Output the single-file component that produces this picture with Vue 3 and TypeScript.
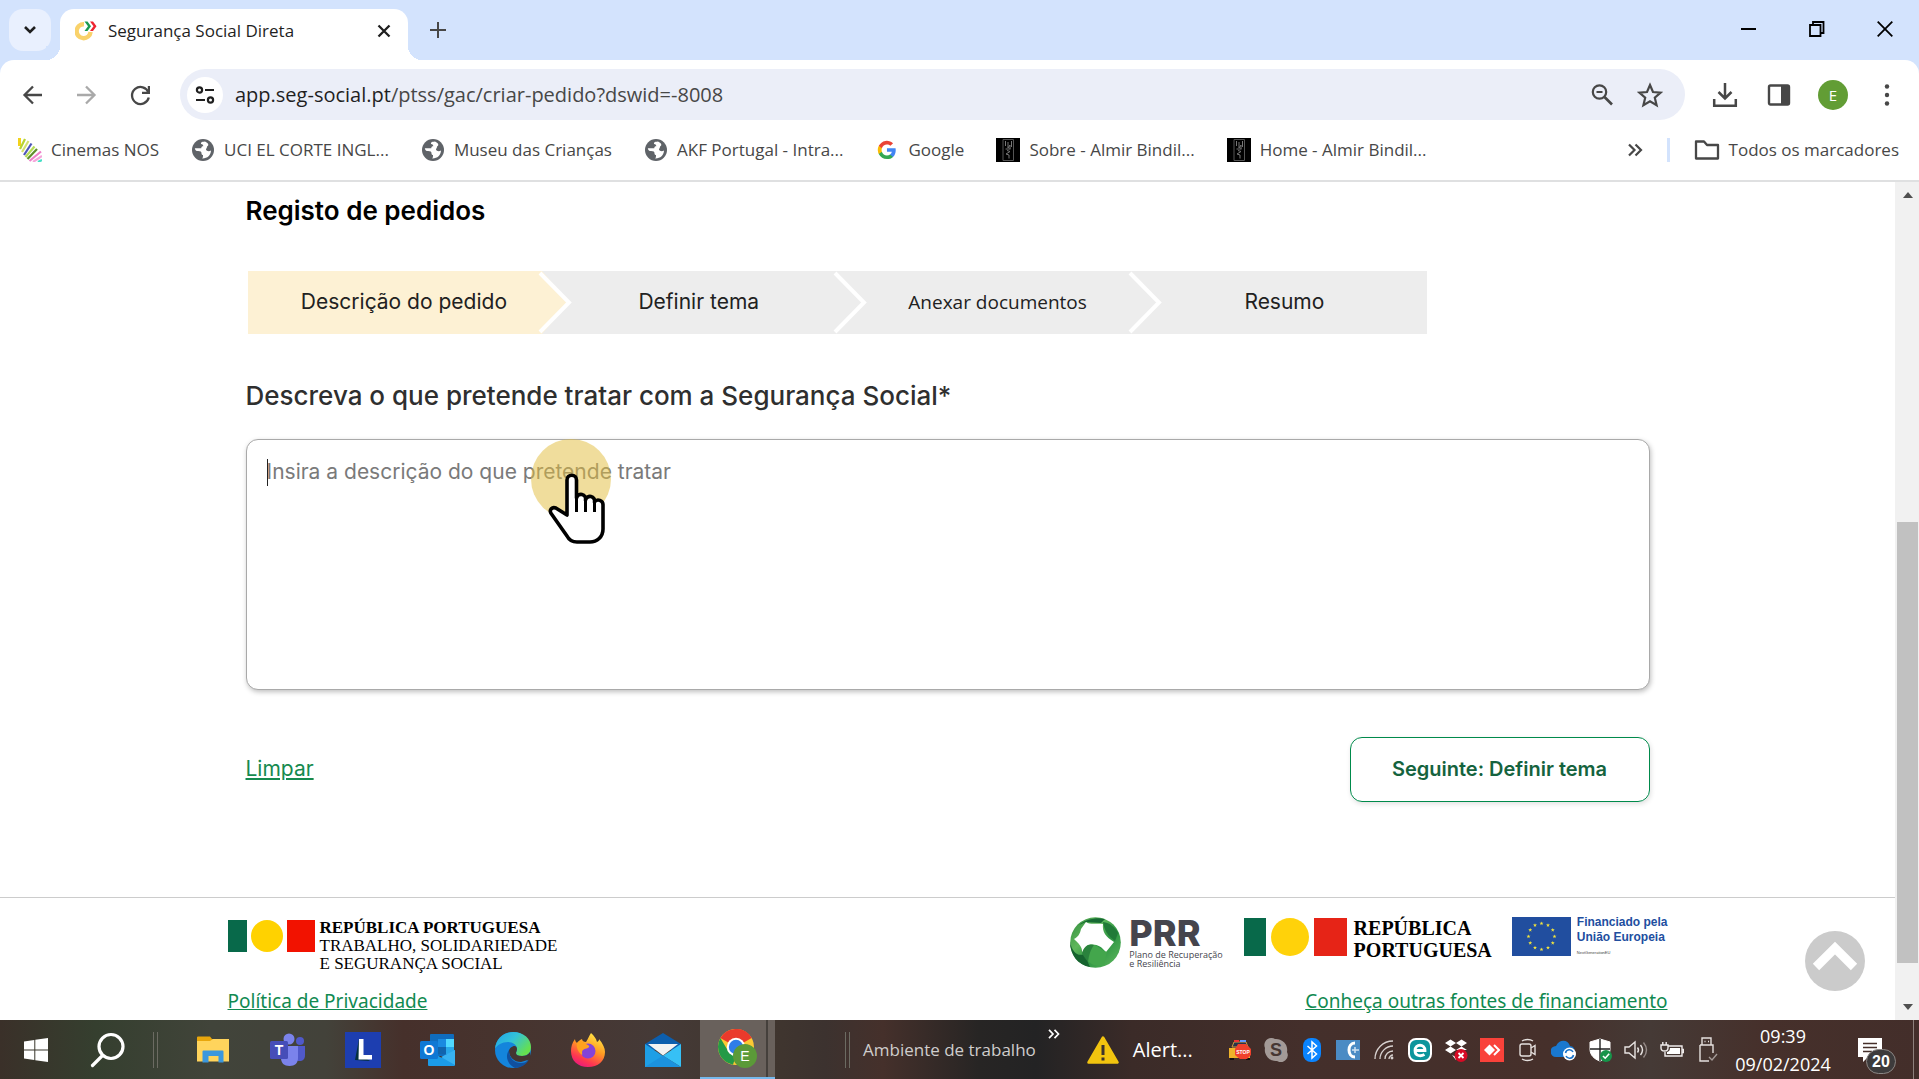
<script setup lang="ts">
import { ref } from 'vue'

interface Bookmark {
  icon: 'nos' | 'globe' | 'google' | 'dark'
  label: string
}

const bookmarks: Bookmark[] = [
  { icon: 'nos', label: 'Cinemas NOS' },
  { icon: 'globe', label: 'UCI EL CORTE INGL...' },
  { icon: 'globe', label: 'Museu das Crianças' },
  { icon: 'globe', label: 'AKF Portugal - Intra...' },
  { icon: 'google', label: 'Google' },
  { icon: 'dark', label: 'Sobre - Almir Bindil...' },
  { icon: 'dark', label: 'Home - Almir Bindil...' },
]

const steps: string[] = ['Descrição do pedido', 'Definir tema', 'Anexar documentos', 'Resumo']
const current = ref(0)
const description = ref('')

/* five-pointed star centred on (cx, cy) */
function star(cx: number, cy: number, r: number): string {
  const points: string[] = []
  for (let i = 0; i < 10; i++) {
    const a = (Math.PI / 5) * i - Math.PI / 2
    const d = i % 2 ? r * 0.4 : r
    points.push(`${(cx + d * Math.cos(a)).toFixed(2)},${(cy + d * Math.sin(a)).toFixed(2)}`)
  }
  return points.join(' ')
}
const euStars: string[] = Array.from({ length: 12 }, (_, i) => {
  const a = (Math.PI / 6) * i
  return star(29.5 + 13 * Math.sin(a), 19.5 - 13 * Math.cos(a), 2.1)
})
</script>

<template>
  <div class="screen">
    <header class="browser">
      <div class="tabstrip">
        <button class="tab-search" aria-label="Pesquisar separadores">
          <svg width="14" height="10" viewBox="0 0 14 10"><path d="M2 2l5 5 5-5" fill="none" stroke="#1f1f1f" stroke-width="2.6" /></svg>
        </button>
        <div class="tab">
          <svg class="favicon" width="22" height="22" viewBox="0 0 22 22">
            <path d="M9 4.2A7 7 0 1 0 15.6 12" fill="none" stroke="#f9d26b" stroke-width="4.4" />
            <path d="M9.5 1.5h3l3.5 4.7-3.5 4.8h-3L13 6.200z" fill="#1b9a50" />
            <path d="M15 1.500h3l3.500 4.700-3.500 4.800h-3l3.500-4.800z" fill="#ee2430" />
          </svg>
          <span class="tab-title">Segurança Social Direta</span>
          <button class="tab-close" aria-label="Fechar separador">
            <svg width="14" height="14" viewBox="0 0 14 14"><path d="M1.500 1.500l11 11M12.500 1.500l-11 11" stroke="#1f1f1f" stroke-width="2.300" /></svg>
          </button>
        </div>
        <button class="new-tab" aria-label="Novo separador">
          <svg width="16" height="16" viewBox="0 0 16 16"><path d="M8 0v16M0 8h16" stroke="#474747" stroke-width="2" /></svg>
        </button>
        <div class="window-buttons">
          <button aria-label="Minimizar"><svg width="16" height="16" viewBox="0 0 16 16"><path d="M0 8h15" stroke="#000" stroke-width="2" /></svg></button>
          <button aria-label="Restaurar"><svg width="16" height="16" viewBox="0 0 16 16"><path d="M1 4h10.500v11H1zM4 4V1h10.500v11h-3" fill="none" stroke="#000" stroke-width="1.800" /></svg></button>
          <button aria-label="Fechar"><svg width="16" height="16" viewBox="0 0 16 16"><path d="M.7.7l14.600 14.600M15.300.7L.7 15.300" stroke="#000" stroke-width="1.800" /></svg></button>
        </div>
      </div>

      <div class="toolbar">
        <button class="tool" aria-label="Anterior">
          <svg width="24" height="24" viewBox="0 0 24 24"><path d="M22 12H5.500M13 3.500L4.500 12l8.500 8.500" fill="none" stroke="#474747" stroke-width="2.300" /></svg>
        </button>
        <button class="tool" aria-label="Seguinte">
          <svg width="24" height="24" viewBox="0 0 24 24"><path d="M3 12h16.500M12 3.500l8.500 8.500-8.500 8.500" fill="none" stroke="#a9a9a9" stroke-width="2.300" /></svg>
        </button>
        <button class="tool" aria-label="Atualizar">
          <svg width="24" height="24" viewBox="0 0 24 24"><path d="M20.500 9.500A8.500 8.500 0 1 0 20.800 14.500" fill="none" stroke="#474747" stroke-width="2.300" /><path d="M22 3v8h-8V8.800h5.800V3z" fill="#474747" /></svg>
        </button>
        <div class="omnibox">
          <button class="site-info" aria-label="Informações do site">
            <svg width="20" height="18" viewBox="0 0 20 18" fill="none" stroke="#1f1f1f" stroke-width="2.200"><circle cx="4.500" cy="4" r="2.600" /><path d="M10 4h9M1 14h9" /><circle cx="15.500" cy="14" r="2.600" /></svg>
          </button>
          <span class="url"><b>app.seg-social.pt</b>/ptss/gac/criar-pedido?dswid=-8008</span>
          <button class="tool" aria-label="Zoom">
            <svg width="24" height="24" viewBox="0 0 24 24" fill="none" stroke="#474747"><circle cx="9.500" cy="9" r="6.700" stroke-width="2.200" /><path d="M14.500 14l7.500 7.500" stroke-width="2.600" /><path d="M6.500 9h6" stroke-width="2" /></svg>
          </button>
          <button class="tool" aria-label="Adicionar aos marcadores">
            <svg width="26" height="26" viewBox="0 0 26 26"><path d="M13 3l3 7 7.600.7-5.800 5 1.800 7.500L13 19.200l-6.600 4 1.800-7.500-5.800-5L10 10z" fill="none" stroke="#474747" stroke-width="2.200" /></svg>
          </button>
        </div>
        <button class="tool" aria-label="Transferências">
          <svg width="26" height="26" viewBox="0 0 26 26" fill="none" stroke="#474747" stroke-width="2.500"><path d="M13 1v15M6.500 10l6.500 6.500 6.500-6.500M2.200 17v6.800h21.600V17" /></svg>
        </button>
        <button class="tool" aria-label="Painel lateral">
          <svg width="24" height="24" viewBox="0 0 24 24"><rect x="2" y="2.500" width="20" height="19" rx="1.500" fill="none" stroke="#474747" stroke-width="2.400" /><path d="M14 2h8v20h-8z" fill="#474747" /></svg>
        </button>
        <button class="tool avatar" aria-label="Perfil">E</button>
        <button class="tool" aria-label="Menu">
          <svg width="6" height="24" viewBox="0 0 6 24" fill="#474747"><circle cx="3" cy="3.500" r="2.200" /><circle cx="3" cy="12" r="2.200" /><circle cx="3" cy="20.500" r="2.200" /></svg>
        </button>
      </div>

      <nav class="bookmarks">
        <a v-for="b in bookmarks" :key="b.label" class="bookmark" href="#">
          <svg v-if="b.icon === 'nos'" width="24" height="24" viewBox="0 0 24 24" fill="none" stroke-width="2.200">
            <path d="M1.500 0v8" stroke="#f2d21c" stroke-width="3" /><path d="M7 1L2 11" stroke="#b7d433" /><path d="M10.500 3L4 14" stroke="#d3e070" /><path d="M13.500 5.500L6 17" stroke="#4d55b8" /><path d="M16.500 8.500L7.500 19" stroke="#b5dc55" /><path d="M19 11L9.500 21" stroke="#5f8f2a" /><path d="M23 13.500L11.500 23" stroke="#ee7fc8" /><path d="M24 18l-9 6" stroke="#f5a5da" /><path d="M24 22l-4 2" stroke="#45dfc6" />
          </svg>
          <svg v-else-if="b.icon === 'globe'" width="24" height="24" viewBox="0 0 24 24">
            <circle cx="12" cy="12" r="11" fill="#5f6368" />
            <path d="M14 3.500c-4 .3-4 1.200-4 2.500 1.700.2 2.300 1 2.300 2.300-1.400 0-2 .6-2 2h-6.500c.6 2.500 1.300 2.700 3.200 2.700 2.600 0 3.500.7 3.500 2.500 0 1.500 1 1.500 1.500 1.500 0 1.500 0 2.500-.8 3.500 5 .2 8.800-3.500 8.800-8-1.700 1.200-4.500.8-5-1-.3-1 1-1.200.9-2.300-.1-1 1.600-1.200 1.400-2.400 0-1.300-1.500-2.600-3.300-3.300z" fill="#fff" />
          </svg>
          <svg v-else-if="b.icon === 'google'" width="24" height="24" viewBox="0 0 24 24">
            <g transform="translate(1 2) scale(.83)"><path fill="#4285F4" d="M22.560 12.250c0-.78-.07-1.530-.2-2.250H12v4.260h5.920a5.060 5.060 0 0 1-2.210 3.310v2.770h3.570c2.080-1.920 3.280-4.740 3.280-8.090z" /><path fill="#34A853" d="M12 23c2.970 0 5.460-.98 7.280-2.660l-3.570-2.770c-.98.660-2.230 1.060-3.710 1.060-2.860 0-5.290-1.930-6.160-4.530H2.180v2.840A11 11 0 0 0 12 23z" /><path fill="#FBBC05" d="M5.840 14.090a6.600 6.600 0 0 1 0-4.180V7.070H2.180a11 11 0 0 0 0 9.860z" /><path fill="#EA4335" d="M12 5.380c1.620 0 3.060.56 4.210 1.640l3.150-3.150A11 11 0 0 0 2.180 7.070l3.660 2.840C6.710 7.310 9.140 5.380 12 5.380z" /></g>
          </svg>
          <svg v-else width="24" height="24" viewBox="0 0 24 24">
            <path d="M0 0h24v24H0z" fill="#000" /><path d="M7 1.500h10.500v21H7z" fill="none" stroke="#555" /><path d="M9.500 3v5M12 4v6l2-3v4M15.500 3v6M9.500 11h5M11 12.500l3 1-4 2.500 3 1v3.500" fill="none" stroke="#777" />
          </svg>
          <span>{{ b.label }}</span>
        </a>
        <button class="more" aria-label="Mais marcadores">
          <svg width="16" height="14" viewBox="0 0 16 14"><path d="M2 1.500L7.500 7 2 12.500M8.500 1.500L14 7l-5.500 5.500" fill="none" stroke="#474747" stroke-width="2.200" /></svg>
        </button>
        <span class="divider"></span>
        <a class="bookmark" href="#">
          <svg width="26" height="24" viewBox="0 0 26 24"><path d="M2 3.500h8l3 3.500h11v13.500H2z" fill="none" stroke="#474747" stroke-width="2.300" stroke-linejoin="round" /></svg>
          <span>Todos os marcadores</span>
        </a>
      </nav>
    </header>

    <div class="viewport">
      <div class="page">
        <main class="content">
          <h1>Registo de pedidos</h1>
          <ol class="steps">
            <li v-for="(s, i) in steps" :key="s" :class="{ active: i === current, plain: i === 2 }">
              {{ s }}
              <svg v-if="i < steps.length - 1" class="chevron" width="34" height="63" viewBox="0 0 34 63">
                <path d="M0 0h4l27 31.500L4 63H0z" :fill="i === current ? '#fdf1d4' : '#ededed'" />
                <path d="M2 2l29 29.500L2 61" fill="none" stroke="#fff" stroke-width="4" />
              </svg>
            </li>
          </ol>
          <label class="question" for="descricao">Descreva o que pretende tratar com a Segurança Social*</label>
          <div class="field">
            <textarea id="descricao" v-model="description" placeholder="Insira a descrição do que pretende tratar"></textarea>
            <span class="caret"></span>
            <span class="halo"></span>
            <svg class="hand" width="58" height="72" viewBox="0 0 58 72">
              <path d="M19 42V7a4.700 4.700 0 0 1 9.500 0V25a4.500 4.500 0 0 1 9 2 4.500 4.500 0 0 1 9 2 4.700 4.700 0 0 1 8.500 3V56c0 8-6 13-13 13H29c-5 0-8-2-10-6L2.800 40c-1.500-3 1.200-6.500 5-5z" fill="#fff" stroke="#000" stroke-width="3.600" stroke-linejoin="round" />
              <path d="M28.500 24v15M37.500 27v12M46.500 30v9" stroke="#000" stroke-width="3" />
            </svg>
          </div>
          <div class="actions">
            <a class="clear" href="#">Limpar</a>
            <button class="next">Seguinte: Definir tema</button>
          </div>
        </main>

        <footer class="footer">
          <div class="footer-inner">
            <div class="logos">
              <div class="gov">
                <svg width="88" height="32" viewBox="0 0 88 32"><path d="M0 0h19v32H0z" fill="#08694a" /><circle cx="39" cy="16" r="16" fill="#ffd200" /><path d="M59 0h28v32H59z" fill="#f21200" /></svg>
                <p><b>REPÚBLICA PORTUGUESA</b><br />TRABALHO, SOLIDARIEDADE<br />E SEGURANÇA SOCIAL</p>
              </div>
              <div class="prr">
                <svg width="51" height="51" viewBox="0 0 51 51">
                  <defs><linearGradient id="leaf" x1="0" y1="0" x2="1" y2="1"><stop offset="0" stop-color="#2f8a3c" /><stop offset=".35" stop-color="#5fb75b" /><stop offset=".6" stop-color="#2c9442" /><stop offset="1" stop-color="#63bb60" /></linearGradient></defs>
                  <circle cx="25.500" cy="25.500" r="25.300" fill="url(#leaf)" />
                  <path d="M0 25C2 35 8 40 14 37l6 13C8 48 0 38 0 25z" fill="#16632f" />
                  <path d="M9 8C15 3 26 0 35 2L31 6 16 5z" fill="#176a33" />
                  <path d="M33 5c1 8 5 14 12 19l3-8C45 10 40 6 33 5z" fill="#217a38" />
                  <path d="M11 12L16 5c4 3 11 1 17 2-1 8 3 13 11 18l-8 10c-5-6-10-9-18-7L12 36C13 30 8 26 4 22c4-2 6-5 7-10z" fill="#fff" />
                  <path d="M12 36c2-7 7-10 12-8 5 1 8 6 13 7l-3 13c-8 2-16 0-22-12z" fill="#43a64c" />
                  <path d="M12 36c2-7 7-10 12-8-3 4-5 9-6 17-3-2-5-5-6-9z" fill="#1a6b33" opacity=".6" />
                </svg>
                <div class="prr-name"><b>PRR</b><span>Plano de Recuperação<br />e Resiliência</span></div>
              </div>
              <div class="gov large">
                <svg width="104" height="38" viewBox="0 0 104 38"><path d="M0 0h22v38H0z" fill="#08694a" /><circle cx="46" cy="19" r="19" fill="#ffd20a" /><path d="M70 0h33v38H70z" fill="#e62417" /></svg>
                <p><b>REPÚBLICA<br />PORTUGUESA</b></p>
              </div>
              <div class="eu">
                <svg width="59" height="39" viewBox="0 0 59 39"><path d="M0 0h59v39H0z" fill="#214e9f" /><polygon v-for="p in euStars" :key="p" :points="p" fill="#f5e63c" /></svg>
                <p><b>Financiado pela<br />União Europeia</b><small>NextGenerationEU</small></p>
              </div>
            </div>
            <div class="links">
              <a href="#">Política de Privacidade</a>
              <a href="#">Conheça outras fontes de financiamento</a>
            </div>
          </div>
        </footer>
        <button class="to-top" aria-label="Voltar ao topo">
          <svg width="60" height="60" viewBox="0 0 60 60"><path d="M11 36L30 17l19 19" fill="none" stroke="#fff" stroke-width="9" /></svg>
        </button>
      </div>

      <div class="scrollbar">
        <span class="arrow"><svg width="10" height="6" viewBox="0 0 10 6"><path d="M0 6l5-6 5 6z" fill="#505050" /></svg></span>
        <span class="before"></span>
        <span class="thumb"></span>
        <span class="after"></span>
        <span class="arrow"><svg width="10" height="6" viewBox="0 0 10 6"><path d="M0 0l5 6 5-6z" fill="#505050" /></svg></span>
      </div>
    </div>

    <div class="taskbar">
      <button class="sys" aria-label="Iniciar">
        <svg width="24" height="24" viewBox="0 0 24 24" fill="#fff"><path d="M0 3.400l10.300-1.500v9.600H0zM11.300 1.700L24 0v11.500H11.300zM0 12.500h10.300v9.600L0 20.600zM11.300 12.500H24V24l-12.700-1.700z" /></svg>
      </button>
      <button class="sys" aria-label="Procurar">
        <svg width="36" height="36" viewBox="0 0 36 36" fill="none" stroke="#fff" stroke-width="3.200"><circle cx="21" cy="14.500" r="12" /><path d="M12.500 23.500L2.500 33.500" stroke-linecap="round" /></svg>
      </button>
      <span class="grip"></span>
      <div class="apps">
        <button aria-label="Explorador">
          <svg width="32" height="28" viewBox="0 0 32 28"><path d="M0 1.500Q0 .5 1 .5h12l2 2.500h16q1 0 1 1V25H0z" fill="#e8a60c" /><path d="M0 5h13l3-2h16v22.500H0z" fill="#ffd45c" /><path d="M5.500 26.500V15.500q0-1 1-1h19q1 0 1 1v11h-5V20h-10v6.500z" fill="#3b97dd" /></svg>
        </button>
        <button aria-label="Teams">
          <svg width="36" height="34" viewBox="0 0 36 34"><circle cx="30" cy="8" r="4" fill="#5059c9" /><circle cx="19" cy="6" r="5.500" fill="#7b83eb" /><path d="M24 13h11v9c0 4-2 6-5.500 6S24 26 24 22z" fill="#5059c9" /><path d="M11 13h17v12c0 5-3 8-8.500 8S11 30 11 25z" fill="#7b83eb" /><rect y="8" width="18" height="18" rx="1.500" fill="#464eb8" /><text x="9" y="22" class="glyph">T</text></svg>
        </button>
        <button aria-label="L">
          <svg width="36" height="36" viewBox="0 0 36 36"><path d="M0 0h36v36H0z" fill="#1d3eb0" /><path d="M14 7l-4 21 15 1-9-6z" fill="#04303f" /><path d="M14 7h4.500v16H27v4.500H13.500z" fill="#fff" /></svg>
        </button>
        <button aria-label="Outlook">
          <svg width="36" height="34" viewBox="0 0 36 34"><rect x="10" y="1" width="24" height="22" rx="1" fill="#0f6cbd" /><path d="M18 6h8v8h-8z" fill="#1a8ae0" /><path d="M26 6h8v8h-8z" fill="#50d9ff" /><path d="M18 14h8v7h-8z" fill="#1164ad" /><path d="M26 14h8v7h-8z" fill="#28a8ea" /><path d="M8 17l14 8 13-8v15q0 1-1 1H9q-1 0-1-1z" fill="#1b9be8" /><path d="M35 17v15L21 24z" fill="#38b3f2" /><rect y="8" width="18" height="18" rx="1.500" fill="#0f78d4" /><text x="9" y="22" class="glyph">O</text></svg>
        </button>
        <button aria-label="Edge">
          <svg width="36" height="36" viewBox="0 0 36 36"><defs><linearGradient id="eg" x1="0" y1="0" x2="1" y2=".6"><stop offset="0" stop-color="#1fa3e8" /><stop offset=".5" stop-color="#33c2d8" /><stop offset="1" stop-color="#66e04d" /></linearGradient></defs><circle cx="18" cy="18" r="18" fill="#1485dc" /><path d="M0 17C1 6 9 0 18 0c11 0 18 7 18 15 0 6-4 9-9 9-4 0-6-1-6-3 0-1 1-2 1-4 0-4-4-7-9-7C7 10 2 13 0 17z" fill="url(#eg)" /><path d="M22 17c0 2-1 3-1 4 0 2 2 3 6 3 3 0 6-1 8-4l1 7-10 3c-7 0-12-5-12-11 0-4 8-8 8-2z" fill="#443531" /><path d="M14 18c0 9 6 13 12 13 3 0 6-1 8-3-3 5-9 8-14 8-6-3-11-10-6-18z" fill="#10509f" /></svg>
        </button>
        <button aria-label="Firefox">
          <svg width="36" height="36" viewBox="0 0 36 36"><defs><linearGradient id="ff" x1=".8" y1="0" x2=".3" y2="1"><stop offset="0" stop-color="#fff04a" /><stop offset=".45" stop-color="#ff9a22" /><stop offset=".8" stop-color="#ff3750" /><stop offset="1" stop-color="#ea1a7e" /></linearGradient></defs><path d="M21 1c3 3 5 5 6 9 2-1 2-2 2-3 4 5 6 9 6 13 0 9-7 15-17 15S1 29 1 19c0-4 1-8 4-12 0 2 1 3 2 4 1-2 3-3 5-4 0 2 2 3 4 3 2-3 3-6 5-9z" fill="url(#ff)" /><circle cx="18" cy="19" r="7.500" fill="#8443d8" /><path d="M7 11c3-2 6-2 9 1 2 1 4 2 3 3-1 2-4 1-6 3-2 2 0 4-1 5-4-3-6-8-5-12z" fill="#ffa11e" /></svg>
        </button>
        <button aria-label="Correio">
          <svg width="36" height="34" viewBox="0 0 36 34"><path d="M0 11L18 0l18 11v6H0z" fill="#0c5ead" /><path d="M0 11l18 12v11H0z" fill="#1e9fe6" /><path d="M18 22.800L36 11v23z" fill="#36c0f5" /><path d="M3 11h30L18 22.500z" fill="#f2f2f2" /><path d="M0 34l18-11.500L36 34z" fill="#1b92de" /></svg>
        </button>
        <button class="running" aria-label="Chrome">
          <svg width="40" height="40" viewBox="0 0 40 40"><circle cx="18" cy="18" r="18" fill="#fcc934" /><path d="M18 18L2.400 9A18 18 0 0 1 33.600 9z" fill="#ea3a2c" /><path d="M18 0a18 18 0 0 1 15.600 9H18z" fill="#ea3a2c" /><path d="M2.400 9l8 13.500L18 26l-3 9.700A18 18 0 0 1 2.400 9z" fill="#249a46" /><circle cx="18" cy="18" r="9.200" fill="#fff" /><circle cx="18" cy="18" r="7.200" fill="#2f7de9" /><circle cx="27" cy="27" r="12" fill="#5b9a38" /><text x="27" y="32" class="glyph thin">E</text></svg>
        </button>
      </div>
      <span class="grip far"></span>
      <span class="desktop">Ambiente de trabalho</span>
      <svg class="raise" width="12" height="10" viewBox="0 0 12 10"><path d="M1 .8L5 5 1 9.200M6.500.8l4 4.200-4 4.200" fill="none" stroke="#fff" stroke-width="1.700" /></svg>
      <svg class="warn" width="32" height="28" viewBox="0 0 32 28"><path d="M16 1.500L30.500 26.500H1.500z" fill="#f2c40f" stroke="#f2c40f" stroke-width="2.500" stroke-linejoin="round" /><path d="M16 9v10M16 21.500v3" stroke="#3c332c" stroke-width="3" /></svg>
      <span class="alert">Alert...</span>

      <div class="tray">
        <span><svg width="24" height="24" viewBox="0 0 24 24"><path d="M6 4h12l2 5H4z" fill="#26354d" stroke="#d39b3f" /><path d="M6 3h5" stroke="#e33" stroke-width="2" /><path d="M12 3h6" stroke="#69f" stroke-width="2" /><path d="M1 10h21v10H1z" fill="#efb32a" /><path d="M2 20h4v2H2zM18 20h4v2h-4z" fill="#111" /><path d="M10 6h8l5 5v6l-4 4h-7l-5-4v-6z" fill="#f0402c" /><text x="15" y="16" class="stop">STOP</text></svg></span>
        <span><svg width="24" height="24" viewBox="0 0 24 24"><path d="M7 0a7 7 0 0 1 4 1 11 11 0 0 1 12 13 7 7 0 0 1-10 9A11 11 0 0 1 1 10 7 7 0 0 1 7 0z" fill="#a39a97" /><text x="12" y="18" class="glyph dark">S</text></svg></span>
        <span><svg width="18" height="24" viewBox="0 0 18 24"><rect width="18" height="24" rx="8" fill="#0a84ff" /><path d="M4.500 8l9 8-4.500 4V4l4.500 4-9 8" fill="none" stroke="#fff" stroke-width="1.500" /></svg></span>
        <span><svg width="24" height="20" viewBox="0 0 24 20"><path d="M0 0h24v20H0z" fill="#4b8bc4" /><path d="M19 3c-8 0-8 14 0 14" fill="none" stroke="#fff" stroke-width="3" /><path d="M19 7v6M16 10h7" stroke="#cfe2f2" stroke-width="1.500" /></svg></span>
        <span><svg width="20" height="20" viewBox="0 0 20 20" fill="none" stroke="#d8d2d0" stroke-width="1.300"><path d="M1 19C1 9 9 1 19 1M6 19C6 12 12 6 19 6M11 19c0-4.500 3.500-8 8-8M15 19c0-2 2-4 4-4" /><circle cx="18" cy="18" r=".8" fill="#fff" /></svg></span>
        <span><svg width="24" height="24" viewBox="0 0 24 24"><rect x="1" y="1" width="22" height="22" rx="7" fill="#0d959c" stroke="#fff" stroke-width="2" /><path d="M7 12.500h10c0-7-10-7-10 0 0 6 6 6 9.500 4" fill="none" stroke="#fff" stroke-width="2.800" /></svg></span>
        <span><svg width="24" height="24" viewBox="0 0 24 24" fill="#fff"><path d="M6.500 1.500L12 5 6.500 8.500 1 5zM17.500 1.500L23 5l-5.500 3.500L12 5zM6.500 8.500L12 12l-5.500 3.500L1 12zM17.500 8.500L23 12H12zM8 17l4 2v3z" /><circle cx="17" cy="17.500" r="6.500" fill="#d60b25" /><path d="M14.500 15l5 5M19.500 15l-5 5" stroke="#fff" stroke-width="1.800" /></svg></span>
        <span><svg width="24" height="24" viewBox="0 0 24 24"><path d="M0 0h24v24H0z" fill="#f9423a" /><path d="M9.500 6.500L15 12l-5.500 5.500L4 12z" fill="#fff" /><path d="M14 7l5 5-5 5" fill="none" stroke="#fff" stroke-width="2" /></svg></span>
        <span><svg width="20" height="24" viewBox="0 0 20 24" fill="none" stroke="#e5e0de" stroke-width="1.400"><rect x="2" y="6" width="11" height="12" rx="2" /><path d="M13 10l4-2.500v9L13 14M4 3c3-2 8-2 11 0M4 21c3 2 8 2 11 0" /></svg></span>
        <span><svg width="26" height="22" viewBox="0 0 26 22"><path d="M5 18a5.500 5.500 0 0 1 0-11C8 0 17 0 19 7c6 0 7 11 0 11z" fill="#1a78cf" /><circle cx="18.500" cy="15" r="6.500" fill="#fff" /><path d="M14.500 14a4 4 0 0 1 7.500-1M22.500 16a4 4 0 0 1-7.500 1" fill="none" stroke="#1a73c9" stroke-width="1.600" /></svg></span>
        <span><svg width="24" height="24" viewBox="0 0 24 24"><path d="M12 1l10 3v7c0 6-4 10-10 12C6 21 2 17 2 11V4z" fill="#fff" stroke="#fff" /><path d="M12 1v22M2 11h20" stroke="#222" stroke-width="1.400" /><circle cx="18" cy="18" r="6" fill="#17944a" /><path d="M15 18l2.200 2.200 4-4.400" fill="none" stroke="#fff" stroke-width="1.600" /></svg></span>
        <span><svg width="24" height="20" viewBox="0 0 24 20" fill="none" stroke="#e8e4e2" stroke-width="1.400"><path d="M1 7h4l6-5v16l-6-5H1z" /><path d="M13.500 7.500q2 2.500 0 5M16.500 5q4 5 0 10" /><path d="M19.500 2.500q6 7.500 0 15" stroke="#948a87" /></svg></span>
        <span><svg width="24" height="18" viewBox="0 0 24 18" fill="none" stroke="#f0eceb" stroke-width="1.400"><path d="M8 5h14v10H5v-4M22.500 8.500h1v3h-1M1 4h7v3q0 3-3.500 3T1 7zM2.800 4V1M6.200 4V1" /><path d="M10 7h10v6H7v-2q3-.5 3-4z" fill="#fff" stroke="none" /></svg></span>
        <span><svg width="20" height="26" viewBox="0 0 20 26" fill="none" stroke="#e5e0de" stroke-width="1.400"><path d="M4 8V1h9v7M2 8h13v8M2 8v16h9M6.500 4.500h1M10 4.500h1" /><path d="M11 20l3 3 5-6" stroke="#a39a97" /></svg></span>
      </div>
      <div class="clock"><span>09:39</span><span>09/02/2024</span></div>
      <button class="notes" aria-label="Notificações">
        <svg width="24" height="24" viewBox="0 0 24 24"><path d="M0 0h24v19H10l-5 5v-5H0z" fill="#fff" /><path d="M5 5.500h14M5 9.500h14M5 13.500h9" stroke="#46302b" stroke-width="1.500" /></svg>
        <span class="count">20</span>
      </button>
      <span class="show-desktop"></span>
    </div>
  </div>
</template>

<style>
body {
  margin: 0;
  background: #fff;
}
</style>

<style scoped>
* {
  box-sizing: border-box;
}
button {
  padding: 0;
  border: 0;
  background: none;
  font: inherit;
  color: inherit;
  cursor: pointer;
}
svg {
  display: block;
  flex: none;
}
p,
h1,
ol {
  margin: 0;
  padding: 0;
}
.screen {
  display: flex;
  flex-direction: column;
  height: 100vh;
  overflow: hidden;
  font-family: "Open Sans", "Noto Sans", sans-serif;
}

/* browser frame */
.browser {
  flex: none;
  background: #d3e3fd;
  font-size: 17px;
  color: #474747;
}
.tabstrip {
  display: flex;
  height: 60px;
  padding: 9px 0 0 9px;
}
.tab-search {
  display: grid;
  place-items: center;
  width: 42px;
  height: 42px;
  border-radius: 14px;
  background: #e9f0fe;
}
.tab {
  position: relative;
  display: flex;
  align-items: center;
  gap: 11px;
  width: 348px;
  height: 51px;
  margin-left: 9px;
  padding: 0 17px 8px 15px;
  border-radius: 14px 14px 0 0;
  background: #fff;
  color: #1f1f1f;
}
.tab::before,
.tab::after {
  content: "";
  position: absolute;
  bottom: 0;
  width: 14px;
  height: 14px;
}
.tab::before {
  right: 100%;
  background: radial-gradient(circle at 0 0, #d3e3fd 14px, #fff 14px);
}
.tab::after {
  left: 100%;
  background: radial-gradient(circle at 100% 0, #d3e3fd 14px, #fff 14px);
}
.tab-title {
  flex: 1;
}
.new-tab {
  display: grid;
  place-items: center;
  width: 60px;
  height: 42px;
}
.window-buttons {
  display: flex;
  margin-left: auto;
}
.window-buttons button {
  display: grid;
  place-items: center;
  width: 68px;
  height: 40px;
}
.toolbar {
  display: flex;
  align-items: center;
  gap: 26px;
  height: 69px;
  padding: 0 18px;
  border-radius: 14px 14px 0 0;
  background: #fff;
}
.tool {
  display: grid;
  place-items: center;
  flex: none;
  width: 28px;
  height: 28px;
}
.omnibox {
  display: flex;
  flex: 1;
  align-items: center;
  gap: 20px;
  height: 51px;
  padding: 0 21px 0 7px;
  border-radius: 26px;
  background: #ebeef8;
}
.site-info {
  display: grid;
  place-items: center;
  width: 36px;
  height: 36px;
  border-radius: 50%;
  background: #fff;
}
.url {
  flex: 1;
  margin-left: -8px;
  font-size: 20px;
}
.url b {
  font-weight: 400;
  color: #1f1f1f;
}
.tool.avatar {
  width: 30px;
  height: 30px;
  margin: 0 -1px;
  border-radius: 50%;
  background: #629d35;
  font-size: 15px;
  color: #fff;
}
.bookmarks {
  display: flex;
  align-items: center;
  gap: 32px;
  height: 53px;
  padding: 0 20px 10px 18px;
  border-bottom: 2px solid #dfe0e1;
  background: #fff;
}
.bookmark {
  display: flex;
  align-items: center;
  gap: 9px;
  color: #474747;
  text-decoration: none;
  white-space: nowrap;
}
.more {
  margin-left: auto;
}
.divider {
  width: 3px;
  height: 24px;
  margin: 0 -8px;
  background: #d3e3fd;
}

/* web page */
.viewport {
  display: flex;
  flex: 1;
  min-height: 0;
}
.page {
  position: relative;
  flex: 1;
  overflow: hidden;
  background: #fff;
}
.content {
  max-width: 1404px;
  margin: 0 auto;
  padding: 13px 0 95px;
  font-family: Inter, "Open Sans", sans-serif;
}
h1 {
  font-size: 26px;
  font-weight: 600;
  line-height: 32px;
  color: #000;
}
.steps {
  display: flex;
  width: 84%;
  margin: 44px 0 46px 2px;
  list-style: none;
}
.steps li {
  position: relative;
  display: grid;
  place-items: center;
  flex: none;
  width: 25%;
  height: 63px;
  padding: 0 0 2px 18px;
  background: #ededed;
  font-size: 21px;
  color: #212121;
}
.steps li:last-child {
  padding-left: 10px;
}
.steps li.plain {
  padding-left: 26px;
  font-family: "Open Sans", sans-serif;
  font-size: 19px;
}
.steps li.active {
  background: #fdf1d4;
}
.chevron {
  position: absolute;
  top: 0;
  right: -30px;
  z-index: 1;
}
.question {
  display: block;
  font-size: 26px;
  font-weight: 500;
  line-height: 32px;
  color: #2f2f2f;
}
.field {
  position: relative;
  margin-top: 27px;
}
textarea {
  display: block;
  width: 100%;
  height: 251px;
  padding: 18px 20px;
  border: 1px solid #a9a9a9;
  border-radius: 12px;
  outline: 0;
  box-shadow: 1px 2px 5px rgba(0, 0, 0, 0.25);
  resize: none;
  font-family: inherit;
  font-size: 21px;
  line-height: 28px;
}
textarea::placeholder {
  color: #7a7a7a;
  opacity: 1;
}
.caret {
  position: absolute;
  top: 20px;
  left: 21px;
  width: 1px;
  height: 27px;
  background: #222;
}
.halo {
  position: absolute;
  top: 0;
  left: 285px;
  width: 80px;
  height: 80px;
  border-radius: 50%;
  background: rgba(226, 190, 65, 0.52);
}
.hand {
  position: absolute;
  top: 34px;
  left: 302px;
}
.actions {
  display: flex;
  align-items: center;
  justify-content: space-between;
  margin-top: 47px;
}
.clear {
  padding-bottom: 2px;
  font-size: 21px;
  color: #168a4f;
}
.next {
  width: 300px;
  height: 65px;
  padding-bottom: 2px;
  border: 1px solid #008a4b;
  border-radius: 12px;
  box-shadow: 1px 2px 5px rgba(0, 0, 0, 0.12);
  font-size: 20px;
  font-weight: 600;
  color: #15633e;
}
.footer {
  border-top: 1px solid #ccc;
}
.footer-inner {
  max-width: 1440px;
  margin: 0 auto;
  padding-top: 19px;
}
.logos {
  display: flex;
  height: 69px;
}
.gov {
  display: flex;
  gap: 4px;
  padding-top: 3px;
  font-family: "Liberation Serif", serif;
  font-size: 17px;
  line-height: 18px;
  color: #000;
}
.gov p {
  margin-top: -1px;
}
.prr {
  display: flex;
  gap: 8px;
  margin-left: auto;
  color: #45454d;
}
.prr-name {
  display: flex;
  flex-direction: column;
  font-size: 9px;
  font-weight: 500;
  line-height: 9px;
}
.prr b {
  font-family: Inter, sans-serif;
  font-size: 36px;
  font-weight: 800;
  line-height: 33px;
}
.gov.large {
  margin-left: 21px;
  padding-top: 1px;
  gap: 6px;
  font-size: 20px;
  line-height: 22px;
}
.eu {
  display: flex;
  gap: 6px;
  margin-left: 20px;
  color: #214e9f;
  font-family: "Liberation Sans", sans-serif;
  font-size: 12px;
  line-height: 15px;
}
.eu p {
  margin-top: -2px;
}
.eu small {
  display: block;
  font-size: 4px;
  color: #444;
}
.links {
  display: flex;
  justify-content: space-between;
  line-height: 30px;
}
.links a {
  font-family: "Noto Sans", sans-serif;
  font-size: 19px;
  color: #118a51;
}
.to-top {
  position: absolute;
  right: 30px;
  bottom: 29px;
  width: 60px;
  height: 60px;
  border-radius: 50%;
  background: #cbcbcb;
}
.scrollbar {
  display: flex;
  flex-direction: column;
  width: 24px;
  padding: 0 1px 0 2px;
  background: #f1f1f1;
}
.arrow {
  display: grid;
  place-items: center;
  height: 26px;
}
.before {
  flex: 314;
}
.thumb {
  flex: 441;
  background: #c1c1c1;
}
.after {
  flex: 31;
}

/* desktop taskbar */
.taskbar {
  display: flex;
  flex: none;
  align-items: center;
  height: 59px;
  color: #fff;
  background: linear-gradient(90deg, #3a3029 0, #353f2f 5%, #41443a 11%, #43423a 17%, #46302b 21%, #47342f 27%, #453a37 34%, #40362f 40%, #3c322f 43%, #45302b 46%, #272524 51%, #232324 54%, #3b2b28 59%, #442f2b 68%, #46302b 81%, #453a36 86%, #46302b 92%, #432e2a 100%);
}
.sys {
  display: grid;
  place-items: center;
  width: 72px;
  height: 59px;
}
.grip {
  width: 5px;
  height: 36px;
  margin: 0 17px 0 9px;
  border: solid #6c6b62;
  border-width: 0 1px;
}
.grip.far {
  margin: 0 13px 0 70px;
}
.apps {
  display: flex;
}
.apps button {
  display: grid;
  place-items: center;
  width: 75px;
  height: 59px;
}
.apps .running {
  border-bottom: 2px solid #76b9ed;
  background: linear-gradient(90deg, #69615c 66px, #45403c 66px, #45403c 68px, #69615c 68px);
}
.glyph {
  font: 700 14px "Liberation Sans", sans-serif;
  text-anchor: middle;
  fill: #fff;
}
.glyph.thin {
  font-weight: 400;
}
.glyph.dark {
  font-size: 18px;
  fill: #463733;
}
.stop {
  font: 700 5px "Liberation Sans", sans-serif;
  text-anchor: middle;
  fill: #fff;
}
.desktop {
  font-size: 17px;
  color: #cfcdcc;
}
.raise {
  margin: 0 27px 32px 12px;
}
.alert {
  margin-left: 14px;
  font-size: 20px;
}
.tray {
  display: flex;
  margin-left: auto;
}
.tray span {
  display: grid;
  place-items: center;
  width: 36px;
}
.clock {
  display: flex;
  flex-direction: column;
  align-items: center;
  width: 114px;
  font-size: 18px;
  line-height: 28px;
}
.notes {
  position: relative;
  display: grid;
  place-items: center;
  width: 60px;
  height: 59px;
  margin-right: 13px;
}
.count {
  position: absolute;
  top: 29px;
  left: 26px;
  width: 30px;
  height: 25px;
  border: 1px solid #8b8684;
  border-radius: 13px;
  background: #3d3b3c;
  font: 700 16px/23px "Liberation Sans", sans-serif;
}
.show-desktop {
  width: 6px;
  height: 59px;
  border-left: 1px solid #8d807c;
}
</style>
